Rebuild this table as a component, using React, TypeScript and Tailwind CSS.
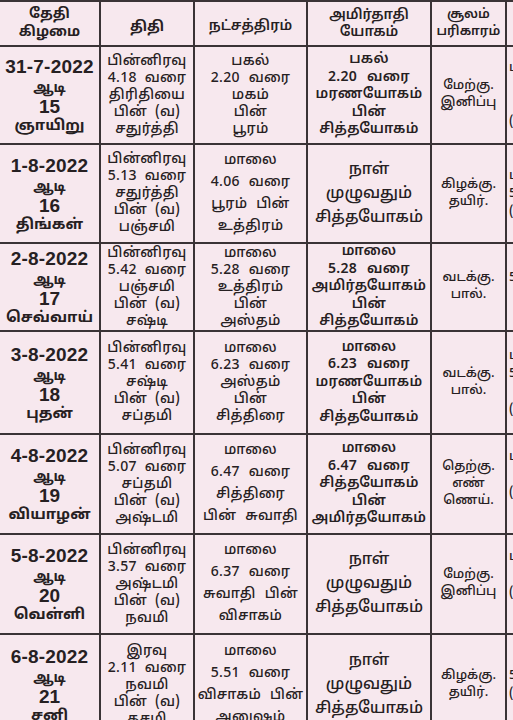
import React from "react";

type Row = {
  date: string;
  month: string;
  day: string;
  weekday: string;
  tithi: string[];
  star: string[];
  yogam: string[];
  soolam: string[];
  extra: string[];
};

const rows: Row[] = [
  {
    date: "31-7-2022",
    month: "ஆடி",
    day: "15",
    weekday: "ஞாயிறு",
    tithi: ["பின்னிரவு", "4.18 வரை", "திரிதியை", "பின் (வ)", "சதுர்த்தி"],
    star: ["பகல்", "2.20 வரை", "மகம்", "பின்", "பூரம்"],
    yogam: ["பகல்", "2.20 வரை", "மரணயோகம்", "பின்", "சித்தயோகம்"],
    soolam: ["மேற்கு.", "இனிப்பு"],
    extra: ["பகல்", "", "", "(மா)"],
  },
  {
    date: "1-8-2022",
    month: "ஆடி",
    day: "16",
    weekday: "திங்கள்",
    tithi: ["பின்னிரவு", "5.13 வரை", "சதுர்த்தி", "பின் (வ)", "பஞ்சமி"],
    star: ["மாலை", "4.06 வரை", "பூரம் பின்", "உத்திரம்"],
    yogam: ["நாள்", "முழுவதும்", "சித்தயோகம்"],
    soolam: ["கிழக்கு.", "தயிர்."],
    extra: ["பகல்", "5.30", "(மா)"],
  },
  {
    date: "2-8-2022",
    month: "ஆடி",
    day: "17",
    weekday: "செவ்வாய்",
    tithi: ["பின்னிரவு", "5.42 வரை", "பஞ்சமி", "பின் (வ)", "சஷ்டி"],
    star: ["மாலை", "5.28 வரை", "உத்திரம்", "பின்", "அஸ்தம்"],
    yogam: ["மாலை", "5.28 வரை", "அமிர்தயோகம்", "பின்", "சித்தயோகம்"],
    soolam: ["வடக்கு.", "பால்."],
    extra: ["", "5.30", "", ""],
  },
  {
    date: "3-8-2022",
    month: "ஆடி",
    day: "18",
    weekday: "புதன்",
    tithi: ["பின்னிரவு", "5.41 வரை", "சஷ்டி", "பின் (வ)", "சப்தமி"],
    star: ["மாலை", "6.23 வரை", "அஸ்தம்", "பின்", "சித்திரை"],
    yogam: ["மாலை", "6.23 வரை", "மரணயோகம்", "பின்", "சித்தயோகம்"],
    soolam: ["வடக்கு.", "பால்."],
    extra: ["பகல்", "5.30", "", "(மா)"],
  },
  {
    date: "4-8-2022",
    month: "ஆடி",
    day: "19",
    weekday: "வியாழன்",
    tithi: ["பின்னிரவு", "5.07 வரை", "சப்தமி", "பின் (வ)", "அஷ்டமி"],
    star: ["மாலை", "6.47 வரை", "சித்திரை", "பின் சுவாதி"],
    yogam: ["மாலை", "6.47 வரை", "சித்தயோகம்", "பின்", "அமிர்தயோகம்"],
    soolam: ["தெற்கு.", "எண்", "ணெய்."],
    extra: ["பகல்", "", "(மா)", ""],
  },
  {
    date: "5-8-2022",
    month: "ஆடி",
    day: "20",
    weekday: "வெள்ளி",
    tithi: ["பின்னிரவு", "3.57 வரை", "அஷ்டமி", "பின் (வ)", "நவமி"],
    star: ["மாலை", "6.37 வரை", "சுவாதி பின்", "விசாகம்"],
    yogam: ["நாள்", "முழுவதும்", "சித்தயோகம்"],
    soolam: ["மேற்கு.", "இனிப்பு"],
    extra: ["பகல்", "", "(மா)", ""],
  },
  {
    date: "6-8-2022",
    month: "ஆடி",
    day: "21",
    weekday: "சனி",
    tithi: ["இரவு", "2.11 வரை", "நவமி", "பின் (வ)", "தசமி"],
    star: ["மாலை", "5.51 வரை", "விசாகம் பின்", "அனுஷம்"],
    yogam: ["நாள்", "முழுவதும்", "சித்தயோகம்"],
    soolam: ["கிழக்கு.", "தயிர்."],
    extra: ["", "5.30", "(மா)", ""],
  },
];

const cell = "bg-[#f7e8ee] flex flex-col items-center justify-center text-center";

function Lines({ lines, className }: { lines: string[]; className: string }) {
  return (
    <>
      {lines.map((line, i) => (
        <div key={i} className={className}>
          {line || "\u00a0"}
        </div>
      ))}
    </>
  );
}

export default function App() {
  return (
    <div
      className="w-[513px] h-[720px] overflow-hidden bg-[#f7e8ee] text-[#262022]"
      style={{ fontFamily: '"Noto Sans Tamil", "Noto Sans", "Liberation Sans", sans-serif' }}
    >
      <div className="grid w-max grid-cols-[99px_92px_111px_122px_73px_80px] grid-rows-[43px_96px_97px_86px_101px_98px_98px_100px] gap-[2px] bg-[#3a3336] pt-[2px]">
        {/* header */}
        <div className={cell}>
          <div className="text-[14px] leading-[18px] font-bold">தேதி</div>
          <div className="text-[14px] leading-[18px] font-bold">கிழமை</div>
        </div>
        <div className={cell}>
          <div className="text-[14px] leading-[18px] font-bold pt-[8px]">திதி</div>
        </div>
        <div className={cell}>
          <div className="text-[14px] leading-[18px] font-semibold pt-[6px]">நட்சத்திரம்</div>
        </div>
        <div className={cell}>
          <div className="text-[14px] leading-[17px] font-semibold">அமிர்தாதி</div>
          <div className="text-[14px] leading-[17px] font-semibold">யோகம்</div>
        </div>
        <div className={cell}>
          <div className="text-[13px] leading-[17px] font-semibold">சூலம்</div>
          <div className="text-[13px] leading-[17px] font-semibold">பரிகாரம்</div>
        </div>
        <div className="bg-[#f7e8ee]" />

        {rows.map((row) => (
          <React.Fragment key={row.date}>
            <div className={cell}>
              <div
                className="text-[19px] leading-[22px] font-bold tracking-[0.2px] mt-[4px]"
                style={{ fontFamily: '"Liberation Sans", sans-serif' }}
              >
                {row.date}
              </div>
              <div className="text-[14px] leading-[18px] font-bold mt-[2px]">{row.month}</div>
              <div
                className="text-[19px] leading-[18px] font-bold"
                style={{ fontFamily: '"Liberation Sans", sans-serif' }}
              >
                {row.day}
              </div>
              <div className="text-[15px] leading-[22px] font-bold">{row.weekday}</div>
            </div>
            <div className={cell}>
              <Lines
                lines={row.tithi}
                className="text-[14px] leading-[17px] font-medium tracking-[0.3px] [word-spacing:4px] whitespace-nowrap"
              />
            </div>
            <div className={cell}>
              <Lines
                lines={row.star}
                className={
                  row.star.length === 4
                    ? "text-[14px] leading-[22px] font-medium tracking-[0.3px] [word-spacing:5px] whitespace-nowrap"
                    : "text-[14px] leading-[17px] font-medium tracking-[0.3px] [word-spacing:5px] whitespace-nowrap"
                }
              />
            </div>
            <div className={cell}>
              <Lines
                lines={row.yogam}
                className={
                  row.yogam.length === 3
                    ? "text-[16px] leading-[24px] font-medium whitespace-nowrap"
                    : "text-[14px] leading-[17.5px] font-semibold tracking-[0.3px] [word-spacing:6px] whitespace-nowrap"
                }
              />
            </div>
            <div className={cell}>
              <Lines lines={row.soolam} className="text-[13px] leading-[17px] font-medium whitespace-nowrap" />
            </div>
            <div className="bg-[#f7e8ee] flex flex-col justify-center pl-[2px]">
              <Lines lines={row.extra} className="text-[13px] leading-[18px] font-medium whitespace-nowrap" />
            </div>
          </React.Fragment>
        ))}
      </div>
    </div>
  );
}
